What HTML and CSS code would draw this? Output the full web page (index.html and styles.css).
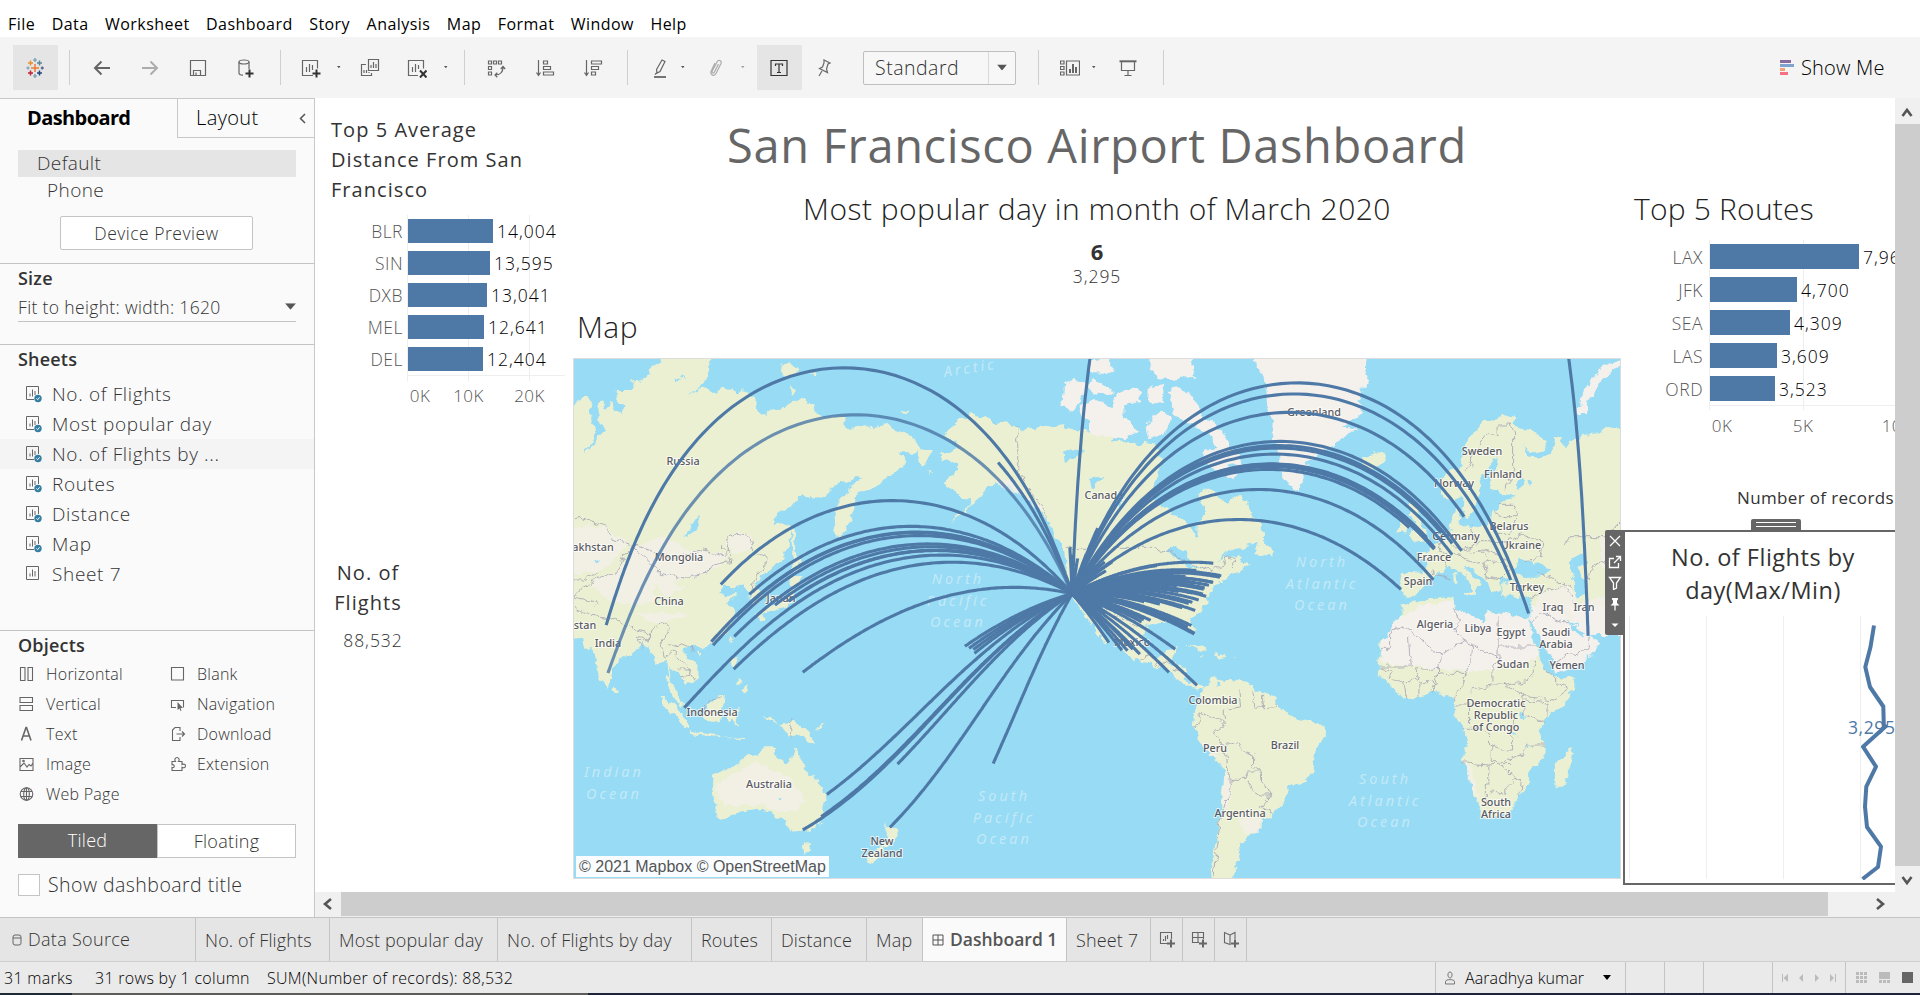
FILE: index.html
```html
<!DOCTYPE html>
<html lang="en">
<head>
<meta charset="utf-8">
<title>San Francisco Airport Dashboard</title>
<link rel="stylesheet" href="styles.css">
</head>
<body>
<svg class="defs" width="0" height="0">
  <symbol id="sheet" viewBox="0 0 18 18"><path d="M1.5 1.5h12v13h-12zM5 11.500V8.500M7.500 11.500V4.500M10 11.500V6" fill="none" stroke="#666"/></symbol>
  <symbol id="sheetok" viewBox="0 0 18 18"><path d="M9 14.500H1.500v-13h12V9M5 11.500V8.500M7.500 11.500V4.500M10 10V6" fill="none" stroke="#666"/><circle cx="13" cy="13.500" r="3.700" fill="#357fa3"/><path d="M11.400 13.500l1.200 1.200 2-2.400" fill="none" stroke="#fff"/></symbol>
  <symbol id="caret" viewBox="0 0 10 6"><path d="M0 0h10L5 6z"/></symbol>
</svg>
<div class="app">
  <nav class="menu"><span>File</span><span>Data</span><span>Worksheet</span><span>Dashboard</span><span>Story</span><span>Analysis</span><span>Map</span><span>Format</span><span>Window</span><span>Help</span></nav>

  <div class="toolbar">
    <div class="tb-on logo"><svg width="18" height="20" viewBox="0 0 18 20"><g fill="none" stroke-width="1.500"><path d="M9 6v8M5 10h8" stroke="#eb7b30"/><path d="M4.500 2.500v5M2 5h5" stroke="#e8912d"/><path d="M13.500 2.500v5M11 5h5" stroke="#5b879b"/><path d="M4.500 12.500v5M2 15h5" stroke="#c72035"/><path d="M13.500 12.500v5M11 15h5" stroke="#1f457e"/><path d="M9 0v4M7.200 2h3.600M9 16v4M7.200 18h3.600M.500 10h3M2 8.400v3.200" stroke="#7fa6b8"/><path d="M14.800 10h3M16.200 8.400v3.200" stroke="#5a6591"/></g></svg></div>
    <i class="sep s11"></i>
    <svg class="ic s22" viewBox="0 0 20 20"><path d="M18 10H3M9.500 3.500L3 10l6.500 6.500" stroke-width="2"/></svg>
    <svg class="ic s28 dim" viewBox="0 0 20 20"><path d="M2 10h15M10.500 3.500L17 10l-6.500 6.500" stroke-width="2"/></svg>
    <svg class="ic s28" viewBox="0 0 20 20"><path d="M2.500 2.500h15v15h-15zM5.500 17v-4.500h7V17M8 17v-2.500"/></svg>
    <svg class="ic s28" viewBox="0 0 20 20"><ellipse cx="8" cy="4" rx="5" ry="2"/><path d="M3 4v11c0 1.500 2 2.200 4 2.200M13 4v7"/><path d="M13.500 11.500v8M9.500 15.500h8" stroke="#333" stroke-width="2"/></svg>
    <i class="sep s24"></i>
    <svg class="ic s20" viewBox="0 0 20 20"><path d="M12 17.500H1.500v-15h15v8M5.500 14V9M8.500 14V6M11.500 12V7"/><path d="M15.500 11.500v8M11.500 15.500h8" stroke="#333" stroke-width="2"/></svg>
    <svg class="cr s15"><use href="#caret"/></svg>
    <svg class="ic s17" viewBox="0 0 20 20"><path d="M8.500 1.500h10v11h-10zM11 10V7M13.500 10V4M16 10V6M6 6.500H1.500v11h10V15M4 15v-3M6.500 15v-3M9 15v-1"/></svg>
    <svg class="ic s27" viewBox="0 0 20 20"><path d="M11 17.500H1.500v-15h15v8M5.500 14V9M8.500 14V6M11.500 11V7"/><path d="M13 12.500l6.500 7M19.500 12.500l-6.500 7" stroke="#333" stroke-width="2"/></svg>
    <svg class="cr s16"><use href="#caret"/></svg>
    <i class="sep s13"></i>
    <svg class="ic s21" viewBox="0 0 20 20"><path d="M2.500 3h3v3h-3zM7.500 3h3v3h-3zM12.500 3h3v3h-3zM2.500 8.500h3v3h-3zM2.500 14h3v3h-3zM17 9c0 5-3 8-8 8M14.800 11L17 8.500l2.200 2.500M11.300 14.800L9 17l2.300 2.200"/></svg>
    <svg class="ic s29" viewBox="0 0 20 20"><path d="M3.500 2v15M1.500 14.500l2 3 2-3M8.500 3h4v3h-4zM8.500 8.500h7v3h-7zM8.500 14h10v3h-10z"/></svg>
    <svg class="ic s28" viewBox="0 0 20 20"><path d="M3.500 2v15M1.500 14.500l2 3 2-3M8.500 3h10v3h-10zM8.500 8.500h7v3h-7zM8.500 14h4v3h-4z"/></svg>
    <i class="sep s24"></i>
    <svg class="ic s22" viewBox="0 0 20 20"><path d="M12 2l3 1.500-5 10-3 1.500-.500-3.500zM5 16.500l2-2"/><path d="M4 19h12" stroke-width="1.800"/></svg>
    <svg class="cr s11"><use href="#caret"/></svg>
    <svg class="ic s18 dim" viewBox="0 0 20 20"><path d="M12.500 6l-4 8c-1 2-3 1-2.300-.800L11 4c1.500-3 5-1.500 4 1.500l-5 10c-1.500 3-6 2-5-2L9 5"/></svg>
    <svg class="cr s14 dimf"><use href="#caret"/></svg>
    <div class="tb-on s9"><svg class="ic box" viewBox="0 0 20 20"><path d="M2 2.500h16v15H2zM6.500 8V6h7v2M10 6v8.500M8 14.500h4" stroke="#333"/></svg></div>
    <svg class="ic s12" viewBox="0 0 20 20"><path d="M10 2l6 3-2 1-1.500 5 1 3.500-8-4 3-1.500L10 5zM8 13l-3 5"/></svg>
    <div class="combo s29"><span>Standard</span><b><svg width="10" height="7" viewBox="0 0 10 6" fill="#555"><use href="#caret"/></svg></b></div>
    <i class="sep s22"></i>
    <svg class="ic s21" viewBox="0 0 20 20"><path d="M.500 3h3.500v3H.500zM.500 8.500h3.500v3H.500zM.500 14h3.500v3H.500zM6.500 3h13v14h-13z"/><path d="M10 15v-4M13 15V6M16 15v-6" stroke-width="2"/></svg>
    <svg class="cr s12"><use href="#caret"/></svg>
    <svg class="ic s19" viewBox="0 0 20 20"><path d="M3.500 4v8.500h13V4M10 12.500v5M6.500 17.500h7"/><path d="M1.500 3.300h17" stroke-width="2"/></svg>
    <i class="sep s25"></i>
    <div class="showme"><svg width="14" height="15"><path d="M0 0h11v3H0z" fill="#8a6d9e"/><path d="M0 4h14v3H0z" fill="#7fa3cf"/><path d="M0 8h5v3H0z" fill="#f2a27a"/><path d="M0 12h8v3H0z" fill="#fb6f84"/></svg><span>Show Me</span></div>
  </div>

  <div class="body">
    <aside class="panel">
      <div class="ptabs"><b>Dashboard</b><div><span>Layout</span><svg width="7" height="11"><path d="M6 1L1.500 5.500 6 10" fill="none" stroke="#555" stroke-width="1.500"/></svg></div></div>
      <div class="devices"><div class="dev on">Default</div><div class="dev sub">Phone</div><div class="preview">Device Preview</div></div>
      <section class="size"><h4>Size</h4><div class="sel"><span>Fit to height: width: 1620</span><svg width="11" height="7" viewBox="0 0 10 6" fill="#555"><use href="#caret"/></svg></div></section>
      <section class="sheets"><h4>Sheets</h4>
        <div class="sh"><svg><use href="#sheetok"/></svg><span>No. of Flights</span></div>
        <div class="sh"><svg><use href="#sheetok"/></svg><span>Most popular day</span></div>
        <div class="sh on"><svg><use href="#sheetok"/></svg><span>No. of Flights by ...</span></div>
        <div class="sh"><svg><use href="#sheetok"/></svg><span>Routes</span></div>
        <div class="sh"><svg><use href="#sheetok"/></svg><span>Distance</span></div>
        <div class="sh"><svg><use href="#sheetok"/></svg><span>Map</span></div>
        <div class="sh"><svg><use href="#sheet"/></svg><span>Sheet 7</span></div>
      </section>
      <section class="objects"><h4>Objects</h4>
        <div class="objs">
          <div><svg viewBox="0 0 16 16"><path d="M1.500 1.500h4.500v13H1.500zM9 1.500h4.500v13H9z"/></svg>Horizontal</div>
          <div><svg viewBox="0 0 16 16"><path d="M1.500 1.500h12v12.500h-12z"/></svg>Blank</div>
          <div><svg viewBox="0 0 16 16"><path d="M1 1.500h12.500v5H1zM1 9.500h12.500v5H1z"/></svg>Vertical</div>
          <div><svg viewBox="0 0 16 16"><path d="M6 11.500H1.500v-7h12v7"/><path d="M7.500 6v8l2-1.500 1 2.500 1-.500-1-2.500h2.500z" fill="#666" stroke="none"/></svg>Navigation</div>
          <div><svg viewBox="0 0 16 16"><path d="M2.500 14.500l4.500-13h.500l4.500 13M4 10h6.500" stroke-width="1.600"/></svg>Text</div>
          <div><svg viewBox="0 0 16 16"><path d="M10 5V1.500H5L2.500 4v10.500H10V11M6.500 8h8M12 5.500L14.500 8 12 10.500"/></svg>Download</div>
          <div><svg viewBox="0 0 16 16"><path d="M1 2.500h13v12H1zM1 11l4-4 3 4 2-2.500 2 1.500 2-3"/><circle cx="4.500" cy="5" r=".8"/></svg>Image</div>
          <div><svg viewBox="0 0 16 16"><path d="M2 5.500h3.500c-1.500-2 0-4 1.500-4s3 2 1.500 4h3.500v3c2-1 3.500 0 3.500 1.500s-1.500 2.300-3.500 1.300v3.200H2v-3c3 .8 3-3.500 0-2.800z"/></svg>Extension</div>
          <div><svg viewBox="0 0 16 16"><circle cx="7.500" cy="8" r="6.300"/><ellipse cx="7.500" cy="8" rx="2.800" ry="6.300"/><path d="M2 5.500h11M2 10.500h11M7.500 2v12"/></svg>Web Page</div>
        </div>
        <div class="seg"><b>Tiled</b><span>Floating</span></div>
        <div class="chk"><i></i><span>Show dashboard title</span></div>
      </section>
    </aside>

    <main class="stage">
      <div class="canvas">
        <div class="col-l">
          <h3 class="dist">Top 5 Average<br>Distance From San<br>Francisco</h3>
          <div class="chart c1">
            <svg class="grid" width="160" height="166"><path d="M.5 0v166M61.500 0v166M122.500 0v166M0 160.500h158" stroke="#eee" fill="none"/></svg>
            <div class="bar"><em>BLR</em><i style="width:85px"></i><span>14,004</span></div>
            <div class="bar"><em>SIN</em><i style="width:82px"></i><span>13,595</span></div>
            <div class="bar"><em>DXB</em><i style="width:79px"></i><span>13,041</span></div>
            <div class="bar"><em>MEL</em><i style="width:76px"></i><span>12,641</span></div>
            <div class="bar"><em>DEL</em><i style="width:75px"></i><span>12,404</span></div>
            <div class="ticks"><span>0K</span><span>10K</span><span>20K</span></div>
          </div>
          <div class="count"><h3>No. of<br>Flights</h3><p>88,532</p></div>
        </div>
        <div class="col-m">
          <h1>San Francisco Airport Dashboard</h1>
          <h2>Most popular day in month of March 2020</h2>
          <p class="six">6</p><p class="n">3,295</p>
          <h2 class="maph">Map</h2>
          <div class="map">
            <svg width="1048" height="521" viewBox="573 358 1048 521">
              <filter id="rough" x="0" y="0" width="100%" height="100%"><feTurbulence type="fractalNoise" baseFrequency=".11" numOctaves="3" seed="4"/><feDisplacementMap in="SourceGraphic" scale="9" xChannelSelector="R" yChannelSelector="G"/></filter>
              <rect x="573" y="358" width="1048" height="521" fill="#97dbf4"/>
              <g filter="url(#rough)">
              <rect x="560" y="340" width="1075" height="555" fill="#97dbf4"/>
              <g class="land" transform="translate(570 350) scale(.34439 .33333)">
                <path d="M-20 200L25 150 48 140 62 160 55 190 72 230 60 290 40 305 65 300 75 265 100 240 85 210 78 165 92 150 105 180 115 150 125 175 152 195 155 165 133 150 133 120 180 120 182 95 235 72 240 50 262 38 270 0 405 0 408 50 392 90 350 130 385 112 400 115 420 130 440 118 475 115 480 130 500 120 538 140 540 175 560 195 575 180 620 175 640 150 660 148 685 152 705 165 705 178 735 190 740 200 800 200 800 235 840 230 850 222 870 232 925 225 975 250 1000 262 1015 295 1050 300 1045 320 1030 345 1012 330 1010 300 985 310 955 310 972 335 965 350 945 370 920 390 890 405 855 425 832 430 825 470 828 490 810 520 795 545 778 567 768 545 765 500 775 470 790 440 820 410 842 385 830 382 800 400 780 398 755 420 740 440 680 438 650 450 635 470 610 490 590 512 600 530 620 515 640 525 642 550 640 580 615 630 580 665 565 675 545 690 540 710 556 740 550 755 535 765 525 750 520 720 500 700 480 712 445 710 440 730 452 742 483 732 485 738 460 755 465 770 478 815 -20 815Z"/>
                <path d="M645 535l10 5 2 60 10 40-8 20-8-10-4-60zM635 690l15-10 25 5-12 15-18 10-10-8zM640 715l10 15-5 25-20 15-30 10-40 15 10-15 45-20 20-20zM545 795l15-5 5 15-15 10zM615 40l20-5 15 15 20 5-20 20-30 5-8-20zM640 110l20 12-14 10zM695 65l22 5-8 10zM960 190l20-10 8 5-18 10zM1040 362l18 5-10 4z"/>
                <path d="M1575 250L1490 240 1440 235 1430 220 1410 235 1390 222 1350 240 1330 235 1312 245 1300 230 1270 218 1225 212 1210 200 1190 205 1165 190 1130 212 1105 235 1087 258 1115 270 1130 290 1105 306 1080 312 1085 325 1130 340 1130 365 1095 375 1090 400 1115 420 1130 445 1165 445 1160 465 1140 490 1100 515 1132 502 1155 482 1168 462 1190 445 1215 408 1230 400 1265 400 1310 435 1345 458 1370 490 1392 520 1405 560 1435 600 1440 660 1448 700 1460 745 1490 790 1575 815Z"/>
                <path class="pale" d="M1435 95l35-5 30 20-12 30-30 45-28-20zM1480 165l50-15 45 20v80l-65-15v-30l-30-10zM1505 100l20-10 50 30v15l-60-5zM1520 35l55 5v30l-45-10z"/>
                <path class="pale soft" d="M190 590L280 560 340 600 460 610 440 650 370 680 300 690 330 715 270 740 240 700 250 760 180 770 110 750 60 700 130 670zM445 580L490 540 525 560 530 600 480 610zM-20 530L100 530 170 580 100 660 -20 680zM1240 380l40 10 60 60 40 30-10 5-60-50-70-30z"/>
                <path class="water" d="M372 498l6 10-10 30-25 20-17 2 18-15zM68 630l20-5-15 15zM300 85l20 5-10 8zM325 75l10 15-12-4zM1435 305l55-12-10 25-25 10-15 8zM1510 400l25-12 8 10-22 12zM1540 385l28-10v12z"/>
                <path class="bd" d="M-20 515l50-10 50 15 20 10 30 40 55 15 70 20 40 20 35-10 60-15 45 15 30-5-10-45 30-15 30 5 20 50 35 15-5 30-30 40-5 40 M185 590l50 50 30 30 70 15 60-15 20-25 50-10 5-20-30-20 0-15 M185 590l-30 30-20 50-60 20-40 20-20 30 60 20 10 30 M-20 690l60 0 40-20M1300 228v145l45 60 45 70M1440 595h135"/>
              </g>
              <g class="land" transform="translate(1090 350) scale(.34439 .33333)">
                <path d="M-10 285L20 262 60 275 100 270 140 285 165 272 190 285 205 325 200 360 190 400 178 440 215 475 260 505 285 515 300 560 312 560 312 520 328 500 328 470 318 440 330 415 370 430 400 468 435 430 470 495 505 545 505 570 450 590 400 605 370 640 400 618 430 615 440 635 465 645 440 662 413 672 390 690 372 695 354 715 345 740 338 760 312 790 -10 800Z"/>
                <path d="M490 575l12-18 10 30 20 15-5 20-25-5-25-5zM785 320l65-15 12 20-17 20-35 15-20-10zM940 582l45-8-10-32-22-45 8-28-28-5-8 30 22 28-18 35zM895 548l28-5 4-32-22-2z"/>
                <path class="pale" d="M225 120l35-5 40 20 30 65 50 40 40 60 20 40-40 10 30 25-12 10-38-20-50-30v-40l40 0-20-40-50-30-50-20zM165 0h125l15 80-65 10-50-10zM0 30l60-5-5 45-55-5zM75 130l60-20 15 40-50 20 0 60-40-5 5-50zM170 110l45-8-5 60-40-5zM0 170l70 5 70 70-40 20-100-10zM160 220l50-40 25 20-10 50-55 15z"/>
                <path class="pale" d="M455 0L500 70 512 120 515 180 530 210 530 250 545 300 555 350 572 400 605 425 618 390 625 345 660 315 700 290 760 250 775 235 735 230 792 195 780 150 790 120 810 100 800 75 805 0Z"/>
                <path d="M1025 440L1012 400 1030 375 1075 350 1092 290 1110 245 1150 215 1190 200 1215 195 1240 205 1225 225 1275 240 1325 275 1320 300 1285 310 1255 285 1270 325 1310 330 1352 290 1350 258 1370 262 1378 300 1400 270 1430 255 1480 250 1500 230 1580 245 1580 815 1275 815 1285 770 1285 735 1240 745 1200 735 1195 700 1230 690 1190 680 1195 720 1170 735 1150 690 1120 665 1085 645 1095 665 1142 700 1125 705 1115 735 1100 690 1070 662 1050 650 1020 665 990 680 965 720 945 742 905 735 900 705 905 665 970 668 985 640 950 615 985 600 1010 575 1045 550 1050 510 1065 470 1078 500 1075 525 1100 535 1160 520 1165 490 1185 480 1190 455 1240 440 1200 430 1165 420 1160 380 1185 345 1180 320 1150 360 1130 400 1130 430 1115 480 1095 510 1080 480 1085 440 1055 455Z"/>
                <path class="pale" d="M1418 195L1422 150 1452 90 1500 45 1580 10 1580 28 1545 45 1500 75 1465 120 1440 165 1442 195Z"/>
                <path class="pale soft" d="M1300 740L1380 700 1430 760 1580 700V815H1290ZM1480 560l100-20v130l-90-10z"/>
                <path d="M895 815L915 780 965 760 1050 742 1062 790 1110 815ZM1055 675l8-15 4 40-10 8zM1080 730l35-3-5 15z"/>
                <path class="water" d="M1232 665L1245 630 1270 635 1300 640 1340 665 1300 680 1255 680ZM1395 630L1430 610 1440 640 1415 650 1435 690 1440 735 1410 740 1405 700ZM1235 400l20-15 5 20-20 15zM1270 390l15 0-5 18zM95 440l-15 30 10 10zM0 390l40-12-35 35zM235 590l45 20 20 30-15 20-30-40-30-10zM270 660l50-15-20 15z"/>
                <path class="bd" d="M65 595h110l60 12 60 35 60 20 30-10 15-35 15 5 5 30M1095 360l20-60 40-50 30 5 0-30 35 0 10 30 0 110-20 50M1110 360l-5-60M1185 460l40 0 15 50-20 40-50 0M1170 490l35 10 30 0M1085 600l50-25 60 0 60-20 60 20-10 50-40 10M1110 530l10 50-30 25-40-20M1060 610l60 30 60-10 40 30-30 30-40-10M1130 600l25 25-15 20M1140 640l10 35 35 10M1100 610l40-10 45 15 35 25M1285 740l50-20 40-10 30 40 30 60M1300 670l60 20 40 25M1375 590l20-30 100 0 45-45M1450 690l5-40 30-15 35 20M985 665l60 20M1010 580l30 40-10 35"/>
              </g>
              <g class="land" transform="translate(570 610) scale(.34439 .33333)">
                <path d="M-20 -10H475L478 20 455 70 420 100 385 112 350 110 330 115 330 130 350 150 370 170 370 200 345 225 335 215 318 190 300 180 285 175 290 215 310 240 325 290 315 290 300 260 283 230 285 200 278 150 265 155 250 165 235 125 228 110 210 105 195 112 180 125 150 150 125 170 125 200 105 233 90 215 75 170 65 110 55 115 40 110 35 90 -20 80Z"/>
                <path d="M125 225l10 3 5 20-12 3zM258 262l25 5 60 60 0 28-20-10-40-50zM345 362l80 10 15 10-90-10zM440 380l70 8-10 5zM370 120l12 8-8 12zM470 75l8 5-8 25zM470 145l12 0 0 25-14 0zM485 200l15 10-10 15zM500 235l15-10 2 20-12 8zM380 310l20-20 35-38 15 10-10 30-8 45-40-5zM455 310l10-8 35-4-20 12 10 40-15-20-10 20zM560 315l20 5 20 25 50-12 40 30 30 35-25-3-30-20-30 5-20-30-45-20zM710 355l25-8-15 12z"/>
                <path d="M412 520L415 495 470 475 510 440 545 435 560 412 600 412 595 435 630 465 642 445 652 403 665 440 682 480 735 525 745 570 735 620 715 650 700 662 665 670 635 655 615 625 595 622 575 600 550 595 500 605 480 620 435 632 425 620 425 580ZM675 700l25 0-5 25-15 3zM915 635l15 20 25 12-20 35-20 5 5-30zM912 705l5 15-25 30-20 15-15-8 20-25z"/>
                <path class="pale soft" d="M425 520L480 490 540 450 560 470 640 500 680 560 660 600 610 610 560 585 480 590 430 570ZM190 10l80 0 90 0-60 20-60 10z"/>
                <path class="water" d="M602 562l10 0 2 10-8 2z"/>
                <path class="bd" d="M10 -5l50 20 60 10 60 30 50 15 0 20-35-5M230 65l0 30-30 0 10 20M230 65l40-30 15 20-20 50 10 40M280 110l40-10 30 10 5 15M275 145l25-20 25 25 20 25 0 15-25 5M315 180l30 0 12 25M385 300l25-30 30-10M641 328v58"/>
              </g>
              <g class="land" transform="translate(1090 610) scale(.34439 .33333)">
                <path d="M-10 -10L13 13 30 60 55 100 45 100 10 50 -30 -10ZM-30 -10L13 13 55 70 82 95 91 120 135 153 182 162 203 175 241 190 256 210 279 232 304 235 325 240 329 227 308 219 287 223 274 207 277 175 253 168 232 162 241 139 247 115 220 117 211 138 182 142 167 130 154 102 159 68 161 49 182 36 220 40 237 28 262 33 280 49 289 68 301 76 304 58 292 24 312 -4V-12Z"/>
                <path d="M275 105l30 0 40 20-20 0-30-15zM360 135l20-5 20 10-28 5zM322 145h10v3h-10zM415 145h8v3h-8z"/>
                <path d="M300 330L310 290 325 240 360 205 400 210 460 215 475 240 540 262 555 300 600 325 660 335 685 355 685 375 655 420 642 500 628 512 575 530 565 575 540 600 525 625 500 628 498 655 455 680 450 700 435 705 440 740 415 770 422 780 408 840 345 840 365 700 375 640 385 560 392 480 345 430 320 390 298 350Z"/>
                <path d="M975 -30L1055 -40 1060 0 1100 10 1140 35 1160 3 1270 25 1290 80 1300 130 1320 180 1345 205 1410 205 1405 235 1370 290 1320 330 1305 370 1320 410 1320 445 1275 485 1275 525 1245 560 1215 610 1180 620 1140 628 1130 590 1110 540 1105 510 1080 450 1095 400 1090 360 1058 320 1062 270 1040 262 1010 240 960 260 915 265 870 225 838 190 838 160 845 130 840 100 880 50 905 10 900 -10Z"/>
                <path d="M1350 500L1350 460 1375 445 1398 418 1402 435 1385 500 1370 530 1352 530Z"/>
                <path class="pale" d="M905 15L960 -10 1055 -30 1060 0 1100 10 1140 35 1160 3 1270 25 1290 80 1300 150 1240 165 1120 185 1000 175 850 160 842 100 880 50ZM1270 25L1285 -10 1370 -10 1400 40 1450 75 1482 100 1430 160 1350 192 1345 150 1310 100 1285 45ZM1385 -10H1580V75H1450L1420 55Z"/>
                <path class="pale soft" d="M390 480l20 30-5 80-20 10zM430 625l70 0-5 40-45 5zM345 430l-25-40 20 10 45 60zM1085 450l25 30 20 90-20-30z"/>
                <path class="water" d="M1385 20l20 30 35 20-10 10-30-20zM1250 305l15 0 0 22-15 0zM1228 355l14 25-8-4zM1268 390l6 30-8-10zM370 215h10v12h-10z"/>
                <path class="bd" d="M845 115h25V65l40-15M910 50l110 85-10 40M925 80l5 88-90 0M1055 -5l15 40-10 20 25 40-70 40M1085 95l100 45M1185 15v130l-15 30 0 40M1110 100l-10 80-30 70-10 20M1185 108h110M840 170l40 15-5 20 30 10 30 0 20-10-10-25 40-5 30-10 0 30-30 50M910 215l10 50M955 260v-45l40 0 0 40M1000 200l50-10 50 0M1105 240l60-15 30 0 80-15 20-60M1200 220l60 40 0 50 60 30M1260 260l90 10 40-30-50-40-20-20M1265 270l65 10 0 40M1062 285l40 0 0 60M1085 355h50l25 20 0 30 50 15 20 0 0-30-10-25 15-50M1165 405v50h25l60-20 15-30 55 0M1080 458l80 7 60-5M1158 465v60h-10v50M1158 545l35 5 40-40 20-5-5 55M1190 465l50 45M300 350l20-5 0-40 60 25 10 20-30 20 10 25 25 10 35-10 20 30 25 10 0 30 20 20 0 30M390 330l0-30 50-10-5-50M470 245l10 50 60-5 5-15M500 260l5 35M390 410l10 60 10 40-10 60-20 40-10 100-10 90M410 508l40 0 10-25 30 0 5 30 30 25-5 20-25 0-20-10-15-35M520 560l-25 30 35 20M140 150l30-15 30 30M205 170l15-20 15 10M240 175l25 5"/>
                <path class="bd" d="M1280 35l30-25 60 25 20 0M1345 165l40-30 60-20 5-35M5 -5l60 5 30 30 45 20"/>
              </g>
              </g>
              <g class="oc"><text x="970" y="367" transform="rotate(-9 970 367)">Arctic</text>
                <text x="958" y="578">North</text><text x="958" y="600">Pacific</text><text x="958" y="621">Ocean</text>
                <text x="1322" y="561">North</text><text x="1322" y="583">Atlantic</text><text x="1322" y="604">Ocean</text>
                <text x="1385" y="778">South</text><text x="1385" y="800">Atlantic</text><text x="1385" y="821">Ocean</text>
                <text x="1004" y="795">South</text><text x="1004" y="817">Pacific</text><text x="1004" y="838">Ocean</text>
                <text x="614" y="771">Indian</text><text x="614" y="793">Ocean</text></g>
              <g class="ct"><text x="683" y="460">Russia</text><text x="679" y="556">Mongolia</text><text x="593" y="546">akhstan</text><text x="669" y="600">China</text><text x="781" y="597">Japan</text><text x="608" y="642">India</text><text x="585" y="624">stan</text><text x="712" y="711">Indonesia</text><text x="769" y="783">Australia</text><text x="882" y="840">New</text><text x="882" y="852">Zealand</text><text x="1104" y="494">Canada</text><text x="1314" y="411">Greenland</text><text x="1454" y="482">Norway</text><text x="1482" y="450">Sweden</text><text x="1503" y="473">Finland</text><text x="1509" y="525">Belarus</text><text x="1521" y="544">Ukraine</text><text x="1456" y="535">Germany</text><text x="1434" y="556">France</text><text x="1418" y="580">Spain</text><text x="1527" y="586">Turkey</text><text x="1553" y="606">Iraq</text><text x="1584" y="606">Iran</text><text x="1435" y="623">Algeria</text><text x="1478" y="627">Libya</text><text x="1511" y="631">Egypt</text><text x="1556" y="631">Saudi</text><text x="1556" y="643">Arabia</text><text x="1567" y="664">Yemen</text><text x="1513" y="663">Sudan</text><text x="1496" y="702">Democratic</text><text x="1496" y="714">Republic</text><text x="1496" y="726">of Congo</text><text x="1496" y="801">South</text><text x="1496" y="813">Africa</text><text x="1213" y="699">Colombia</text><text x="1215" y="747">Peru</text><text x="1285" y="744">Brazil</text><text x="1240" y="812">Argentina</text><text x="1132" y="641">Mexico</text></g>
              <g id="routes"></g>
              <rect x="573.500" y="358.500" width="1047" height="520" fill="none" stroke="#dcdcdc"/>
            </svg>
            <div class="attr">© 2021 Mapbox © OpenStreetMap</div>
          </div>
        </div>
        <div class="col-r">
          <h2>Top 5 Routes</h2>
          <div class="chart c2">
            <svg class="grid" width="190" height="170"><path d="M.5 0v170M94.500 0v170M0 165.500h190" stroke="#eee" fill="none"/></svg>
            <div class="bar"><em>LAX</em><i style="width:149px"></i><span>7,968</span></div>
            <div class="bar"><em>JFK</em><i style="width:87px"></i><span>4,700</span></div>
            <div class="bar"><em>SEA</em><i style="width:80px"></i><span>4,309</span></div>
            <div class="bar"><em>LAS</em><i style="width:67px"></i><span>3,609</span></div>
            <div class="bar"><em>ORD</em><i style="width:65px"></i><span>3,523</span></div>
            <div class="ticks"><span>0K</span><span>5K</span><span>10K</span></div>
          </div>
          <p class="rec">Number of records</p>
          <div class="zone">
            <div class="handle"><i></i><i></i></div>
            <div class="ztools">
              <svg viewBox="0 0 14 14"><path d="M2 2l10 10M12 2L2 12"/></svg>
              <svg viewBox="0 0 14 14"><path d="M6 3.500H1.500v9h9V8M6 8l6-6M8 1.500h4.500V6"/></svg>
              <svg viewBox="0 0 14 14"><path d="M1.500 1.500h11L8.500 7v5l-3 1.500V7z"/></svg>
              <svg viewBox="0 0 14 14"><path d="M4 1h6v1.500L9 3.500V6l2.500 2.500H2.500L5 6V3.500L4 2.500z" fill="#fff" stroke="none"/><path d="M7 8v5.500"/></svg>
              <svg viewBox="0 0 14 14"><path d="M3.500 5.500h7L7 9z" fill="#fff" stroke="none"/></svg>
            </div>
            <h3>No. of Flights by<br>day(Max/Min)</h3>
            <svg class="line" width="270" height="264" viewBox="1626 616 270 264"><path d="M1629.500 616v263M1706.500 616v263M1783.500 616v263M1860.500 616v263" stroke="#eee" fill="none"/><text x="1848" y="733.500">3,295</text><path d="M1874 625.500L1870.500 647 1865.300 667 1870 687 1883.300 706.500 1883.800 725 1885.500 726.500 1863 746.700 1876 766.700 1866.300 786.700 1865 806.700 1867 827 1881 846.700 1878 867 1862.500 879" fill="none" stroke="#4e79a7" stroke-width="4" stroke-linejoin="round"/></svg>
          </div>
        </div>
      </div>
      <div class="vs"><svg viewBox="0 0 24 26"><path d="M7.500 18l4.500-6 4.500 6"/></svg><i></i><svg viewBox="0 0 24 26"><path d="M7.500 11l4.500 6 4.500-6"/></svg></div>
      <div class="hs"><svg viewBox="0 0 26 24"><path d="M16 7l-6 5 6 5"/></svg><i></i><svg class="r" viewBox="0 0 26 24"><path d="M10 7l6 5-6 5"/></svg></div>
    </main>
  </div>

  <div class="tabs">
    <div class="t1"><svg width="10" height="12" viewBox="0 0 10 12"><rect x="1" y="1" width="8" height="10" rx="2" fill="none" stroke="#666"/><path d="M1 4h8" stroke="#666"/></svg><span>Data Source</span></div>
    <div class="t2">No. of Flights</div><div class="t3">Most popular day</div><div class="t4">No. of Flights by day</div><div class="t5">Routes</div><div class="t6">Distance</div><div class="t7">Map</div>
    <div class="t8"><svg width="12" height="12"><path d="M1 1h10v10H1zM6 1v10M1 6h10" fill="none" stroke="#555"/></svg><b>Dashboard 1</b></div>
    <div class="t9">Sheet 7</div>
    <div class="ta"><svg width="17" height="17"><path d="M8 12.500H1.500v-11h11V8M4.500 10V8M6.500 10V5M8.500 8V4"/><path d="M12 8.500v8M8 12.500h8" stroke-width="2"/></svg></div>
    <div class="ta"><svg width="17" height="17"><path d="M8 11.500H1.500v-10h11V8M7 1.500v10M1.500 6.500h11"/><path d="M12 8.500v8M8 12.500h8" stroke-width="2"/></svg></div>
    <div class="ta"><svg width="17" height="17"><path d="M7 4L1.500 1.500v10L7 13.500V4l5-2.500V8"/><path d="M12 8.500v8M8 12.500h8" stroke-width="2"/></svg></div>
  </div>
  <div class="status">
    <span class="m1">31 marks</span><span class="m2">31 rows by 1 column</span><span class="m3">SUM(Number of records): 88,532</span>
    <div class="user"><svg width="12" height="14"><path d="M6 1c3 0 2.500 6 0 6S3 1 6 1zM1.500 13V10.500C1.500 8 10.500 8 10.500 10.500V13z" fill="none" stroke="#777"/></svg><span>Aaradhya kumar</span><svg width="8" height="5" viewBox="0 0 10 6"><use href="#caret"/></svg></div>
    <div class="c39"></div><div class="c39"></div><div class="c69"></div>
    <div class="navs"><svg width="56" height="8" fill="#bbb"><path d="M1 0h1v8H1zM7 0v8L2.500 4zM22 0v8l-4-4zM34 0v8l4-4zM49 0v8l4-4zM54 0h1v8h-1z"/></svg></div>
    <div class="views"><svg width="58" height="13"><g fill="#bbb"><path d="M0 1h3v3H0zM4 1h3v3H4zM8 1h3v3H8zM0 5h3v3H0zM4 5h3v3H4zM8 5h3v3H8zM0 9h3v3H0zM4 9h3v3H4zM8 9h3v3H8zM23 1h11v7H23zM23 9h3v3h-3zM27 9h3v3h-3zM31 9h3v3h-3z"/></g><path d="M46 1h11v11H46z" fill="#666"/></svg></div>
  </div>
  <div class="strip"></div>
</div>
<script src="routes.js"></script>
</body>
</html>
```
FILE: routes.js
```js
// Great-circle flight paths from SFO, drawn in Web Mercator.
(function () {
  var W = 1045, R = W / (2 * Math.PI), X0 = 1427.4, Y0 = 711.7, D = Math.PI / 180;
  var home = [37.62, -122.375];
  var stops = [
    [28.57,77.1],[13.2,77.7,.82],[1.35,103.99],[22.31,113.92],[25.08,121.23],[14.51,121.02],[37.46,126.44],[40.08,116.58],
    [35.76,140.39],[35.55,139.78],[34.43,135.24],[31.14,121.8],[23.39,113.3],[13.48,144.8],[-27.38,153.12],[-33.94,151.18],
    [-37.67,144.84],[-37.01,174.79],[-17.55,-149.6],[-17.76,177.44],[21.32,-157.92],[20.9,-156.43],[19.74,-156.05],[21.98,-159.34],
    [55.62,12.65],[51.47,-0.45],[51.15,-0.18],[49.01,2.55],[48.72,2.38],[50.03,8.56],[48.35,11.79],[47.46,8.55],[52.31,4.76],[53.42,-6.27],
    [41.3,2.08],[38.77,-9.13],[41.26,28.74],[32,34.89],[25.25,55.36],[64.8,-147.9],[49.19,-123.18],[47.45,-122.3],[45.6,-122.6],
    [43.68,-79.63],[45.47,-73.74],[40.64,-73.78],[42.36,-71.01],[40.69,-74.17],[39.87,-75.24],[38.95,-77.46],[39.18,-76.67],[38.85,-77.04],
    [35.21,-80.94],[33.64,-84.43],[28.43,-81.31],[27.98,-82.53],[26.07,-80.15],[25.79,-80.29],[41.98,-87.9],[42.21,-83.35],[44.88,-93.22],
    [39.86,-104.67],[29.98,-95.34],[32.9,-97.04],[30.2,-97.67],[29.99,-90.26],[36.12,-86.68],[41.41,-81.85],[40.49,-80.23],[39.72,-86.29],
    [40,-82.89],[39.3,-94.71],[38.75,-90.37],[40.79,-111.98],[33.43,-112.01],[36.08,-115.15],[33.94,-118.41],[32.73,-117.19],[35.39,-97.6],
    [29.53,-98.47],[51.12,-114],[53.31,-113.58],[45.78,-111.15],[43.56,-116.22],[45.81,-108.54],[43.6,-110.74],[35.04,-106.61],[32.12,-110.94],
    [35.88,-78.79],[42.95,-87.9],[41.3,-95.89],[19.44,-99.07],[20.52,-103.31],[20.68,-105.25],[23.15,-109.72],[21.04,-86.87],[13.44,-89.05],
    [9.07,-79.38],[20.99,-101.48],[46.6,-120.5],[44.25,-121.15],[47.6,-117.5],[41.97,-71.5],[38.2,-85.7],[37.5,-77.3],[36.9,-76.2],
    [35.2,-89.9],[34.7,-92.2],[32.9,-80],[43.1,-77.7],[36.2,-95.9],[38.8,-104.7],[37.8,-81.1],[34.9,-82.2]
  ];
  function unit(p) {
    var a = p[0] * D, b = p[1] * D;
    return [Math.cos(a) * Math.cos(b), Math.cos(a) * Math.sin(b), Math.sin(a)];
  }
  var out = '', A = unit(home);
  stops.forEach(function (s) {
    var B = unit(s), w = Math.acos(A[0] * B[0] + A[1] * B[1] + A[2] * B[2]), n = 120, last = home[1], d = '';
    for (var i = 0; i <= n; i++) {
      var p = Math.sin((1 - i / n) * w) / Math.sin(w), q = Math.sin(i / n * w) / Math.sin(w);
      var x = p * A[0] + q * B[0], y = p * A[1] + q * B[1], z = p * A[2] + q * B[2];
      var lon = Math.atan2(y, x) / D;
      while (lon - last > 180) lon -= 360;
      while (lon - last < -180) lon += 360;
      last = lon;
      var m = Math.log(Math.tan(Math.PI / 4 + Math.asin(z) / 2));
      d += (i ? 'L' : 'M') + (X0 + lon * D * R).toFixed(1) + ' ' + (Y0 - R * m).toFixed(1);
    }
    out += '<path d="' + d + '" opacity="' + (s[2] || 1) + '"/>';
  });
  document.getElementById('routes').innerHTML = out;
})();
```
FILE: styles.css
```css
*{box-sizing:border-box}
body{margin:0;background:#fff;font-family:"Open Sans","Noto Sans",sans-serif;color:#333;font-weight:400}
h1,h2,h3,h4,p{margin:0;font-weight:400}
em,i{font-style:normal}
.defs{position:absolute}
.app{width:1920px;height:995px;display:flex;flex-direction:column;overflow:hidden;white-space:nowrap}
.menu{height:37px;flex:none;display:flex;gap:16.5px;padding:12px 0 0 8px;font-size:16px;line-height:24px;letter-spacing:.45px;color:#000}
.toolbar{height:61px;flex:none;background:#f4f4f4;display:flex;align-items:center;padding:0 35px 0 13px}
.toolbar>*{flex:none}
.tb-on{width:45px;height:45px;background:#e5e5e5;display:flex;align-items:center;justify-content:center}
.logo svg,.box{margin-right:2px}
.sep{width:1px;height:35px;background:#cfcfcf}
.ic{width:20px;height:20px;fill:none;stroke:#666;stroke-width:1.2}
.dim{opacity:.5}
.cr{width:6px;height:4px;margin:0 1px;fill:#555}
.cr use{transform:scale(.6)}
.dimf{opacity:.5}
.s9{margin-left:9px}.s11{margin-left:11px}.s12{margin-left:12px}.s13{margin-left:13px}.s14{margin-left:15px}.s15{margin-left:16px}.s16{margin-left:17px}.s17{margin-left:16px}.s18{margin-left:18px}.s19{margin-left:19px}.s20{margin-left:20px}.s21{margin-left:21px}.s22{margin-left:22px}.s24{margin-left:24px}.s25{margin-left:25px}.s27{margin-left:27px}.s28{margin-left:28px}.s29{margin-left:29px}
.combo{width:153px;height:34px;border:1px solid #bfbfbf;border-radius:2px;display:flex;background:#f7f7f7;font-size:19.5px;font-weight:300;letter-spacing:.5px;line-height:32px}
.combo span{flex:1;padding-left:11px}
.combo b{width:27px;border-left:1px solid #d9d9d9;display:flex;align-items:center;justify-content:center}
.showme{margin-left:auto!important;display:flex;align-items:center;gap:7px;font-size:20px;font-weight:300;color:#000;width:105px;letter-spacing:.2px}
.body{height:819px;flex:none;display:flex}
.panel{width:315px;flex:none;background:#fafafa;border-right:1px solid #c8c8c8;border-top:1px solid #c8c8c8;display:flex;flex-direction:column;font-weight:300}
.ptabs{height:39px;display:flex;font-size:20px;line-height:38px;color:#000}
.ptabs b{width:177px;padding-left:27px;font-weight:700;letter-spacing:-.6px}
.ptabs div{flex:1;border-left:1px solid #c8c8c8;border-bottom:1px solid #c8c8c8;padding:0 8px 0 18px;display:flex;justify-content:space-between;align-items:center;letter-spacing:.4px}
.devices{height:125px;padding:12px 18px 0;font-size:19px;letter-spacing:.4px;line-height:27px}
.dev{padding-left:19px}
.dev.on{background:#e5e5e5}
.dev.sub{padding-left:29px}
.preview{width:193px;height:34px;margin:12px 0 0 42px;border:1px solid #c4c4c4;border-radius:2px;background:#fff;text-align:center;font-size:17.5px;letter-spacing:.5px;line-height:32px}
.panel section{border-top:1px solid #c4c4c4;padding:0 18px}
h4{font-weight:600;font-size:18px;line-height:28px;letter-spacing:.2px}
.size{height:81px}
.sel{display:flex;justify-content:space-between;align-items:center;border-bottom:1px solid #c4c4c4;height:30px;font-size:17.5px;letter-spacing:.35px}
.sheets{height:286px;padding:0!important}
.sheets h4{padding:0 18px;margin-bottom:6px}
.sh{height:30px;padding-left:25px;display:flex;align-items:center;gap:9px;font-size:19px;letter-spacing:.65px}
.sh.on{background:#f4f4f4}
.sh svg{width:18px;height:18px}
.objects{height:286px}
.objs{display:grid;grid-template-columns:151px 1fr;grid-auto-rows:30px;font-size:16px;letter-spacing:.25px}
.objs div{display:flex;align-items:center;gap:10px}
.objs svg{width:18px;height:16px;margin-left:0;fill:none;stroke:#666;stroke-width:1.1}
.seg{display:flex;height:34px;margin-top:15px;font-size:18px;letter-spacing:.3px;line-height:32px;text-align:center}
.seg b{width:139px;background:#666;color:#fff;font-weight:300}
.seg span{flex:1;border:1px solid #c4c4c4;background:#fff}
.chk{display:flex;align-items:center;gap:8px;margin-top:13px;font-size:19.5px;letter-spacing:.45px}
.chk i{width:22px;height:22px;border:1px solid #c4c4c4;background:#fff}
.stage{width:1605px;display:grid;grid-template:794px 25px/1580px 25px;background:#fff}
.canvas{overflow:hidden;display:flex}
.canvas>div{flex:none}
.col-l{width:258px}
h3{font-size:20px;font-weight:500;line-height:30px;color:#333;letter-spacing:1.05px}
.dist{padding:17px 0 0 16px;height:117px}
.chart{position:relative;display:flex;flex-direction:column}
.grid{position:absolute}
.c1{height:195px;padding-top:4px;gap:8px}
.c1 .grid{left:92px;top:0}
.bar{flex:none;display:flex;align-items:center;position:relative;height:24px;font-size:17.500px;font-weight:300;letter-spacing:1px;color:#000}
.bar em{width:88px;margin-right:5px;text-align:right;color:#555;letter-spacing:.5px}
.bar i{height:100%;background:#4e79a7}
.bar span{margin-left:4px}
.ticks{flex:none;display:flex;font-size:17px;font-weight:300;letter-spacing:.4px;line-height:24px;color:#555;margin-top:5px}
.c1 .ticks span{width:61px;text-align:center}
.c1 .ticks span:first-child{margin-left:87px;width:36px}
.count{text-align:center;width:106px;margin-top:148px}
.count p{font-size:17.500px;font-weight:300;letter-spacing:1px;line-height:28px;padding:8px 0 0 10px;color:#333}
.col-m{width:1052px}
h1{font-size:47px;font-weight:500;line-height:60px;letter-spacing:.65px;color:#666;text-align:center;padding-top:17px;height:91px;margin-left:-4px}
h2{font-size:30px;font-weight:300;line-height:40px;letter-spacing:.47px;text-align:center;color:#222;margin-left:-4px}
.six{font-weight:700;font-size:22px;line-height:24px;text-align:center;margin-left:-4px;padding-top:10px}
.n{font-size:17.500px;font-weight:300;letter-spacing:1px;line-height:26px;text-align:center;margin-left:-4px;color:#333}
.maph{text-align:left;margin:18px 0 0 4px}
.map{height:521px;margin-top:11px;position:relative}
.map svg{display:block}
.land{fill:#ebf0d2}
.pale{fill:#f4f0eb}
.soft{opacity:.75}
.water{fill:#97dbf4}
.bd{fill:none;stroke:#a3a3b3;stroke-width:2.4}
#routes{fill:none;stroke:#4e79a7;stroke-width:3.1}
.oc{font:italic 14.500px "Noto Sans",sans-serif;letter-spacing:3px;fill:#c3e9f8;text-anchor:middle;dominant-baseline:central}
.ct{font:500 10.800px "Noto Sans",sans-serif;fill:#5a5a62;text-anchor:middle;dominant-baseline:central;paint-order:stroke;stroke:#fff;stroke-opacity:.7;stroke-width:2px}
.attr{position:absolute;left:3px;bottom:2px;background:rgba(255,255,255,.95);font:16px/21px "Liberation Sans",sans-serif;color:#555;padding:0 3px;height:21px}
.col-r{width:400px}
.col-r>h2{text-align:left;margin:91px 0 0 9px;letter-spacing:.2px}
.c2{height:185px;margin-top:11px;padding-top:4px;gap:8px}
.c2 .bar{height:25px}
.c2 .bar em{width:78px;margin-right:7px}
.c2 .grid{left:84px;top:0}
.c2 .ticks span{width:94px;text-align:center}
.c2 .ticks span:first-child{width:50px;margin-left:72px}
.c2 .ticks span:nth-child(2){margin-left:9px}
.rec{font-size:17px;font-weight:500;line-height:24px;margin:61px 0 0 112px;letter-spacing:.35px}
.zone{position:relative;width:280px;height:355px;margin:20px 0 0 -2px;border:2px solid #666;border-right:0;background:#fff}
.handle{position:absolute;left:126px;top:-13px;width:50px;height:12px;background:#666;border-radius:2px 2px 0 0;padding:3px 5px}
.handle i{display:block;height:1px;background:#fff;margin-bottom:3px}
.ztools{position:absolute;left:-20px;top:-2px;width:20px;height:105px;background:#666;border-radius:2px 0 0 2px;display:flex;flex-direction:column;align-items:center;justify-content:space-around}
.ztools svg{width:14px;height:14px;fill:none;stroke:#fff;stroke-width:1.3}
.zone h3{font-size:23.5px;font-weight:400;line-height:33px;text-align:center;width:276px;padding-top:9px;letter-spacing:.5px}
.zone .line{position:absolute;left:1px;top:84px}
.line text{font:17.500px "Open Sans",sans-serif;letter-spacing:.6px;fill:#4e79a7}
.vs{background:#f0f0f0;display:flex;flex-direction:column;height:794px}
.vs svg,.hs svg{fill:none;stroke:#555;stroke-width:2.6}
.vs svg{width:24px;height:26px}
.vs i{flex:1;background:#cdcdcd}
.hs{background:#f0f0f0;display:flex;height:25px;grid-column:1/3}
.hs svg{width:26px;height:24px}
.hs i{width:1487px;height:24px;background:#cdcdcd}
.hs .r{margin-left:39px}
.tabs{height:45px;flex:none;background:#e5e5e5;border-top:1px solid #c4c4c4;border-bottom:1px solid #cfcfcf;display:flex;font-size:18px;font-weight:300;letter-spacing:.15px;line-height:45px;color:#333}
.tabs div{border-right:1px solid #c4c4c4;padding-left:9px;flex:none}
.t1{width:196px;padding-left:12px!important;display:flex;align-items:center;gap:6px;letter-spacing:.3px}
.t2{width:134px}.t3{width:168px}.t4{width:194px}.t5{width:80px}.t6{width:95px}.t7{width:56px}
.t8{width:144px;background:#fafafa;display:flex;align-items:center;gap:6px}
.t8 b{font-weight:600;font-size:17.5px;letter-spacing:0;color:#555}
.t9{width:84px}
.ta{width:32px;display:flex;align-items:center;padding:0 0 0 8px!important}
.ta svg{fill:none;stroke:#666;stroke-width:1.1}
.status{height:31px;flex:none;background:#eaeaea;display:flex;align-items:center;font-size:16px;font-weight:300;letter-spacing:.3px;color:#000}
.m1{width:95px;padding-left:4px}.m2{width:172px}
.user{margin-left:auto;width:190px;display:flex;align-items:center;padding-left:8px;letter-spacing:.1px}
.user span{padding:0 17px 0 9px;width:147px}
.status div{height:31px;border-left:1px solid #c4c4c4;flex:none}
.c39{width:39px}.c69{width:69px}
.navs{width:73px;padding:12px 0 0 8px}
.views{width:75px;padding:9px 0 0 10px}
.navs svg,.views svg{display:block}
.strip{height:2px;background:linear-gradient(90deg,#1e2a36 0 72px,#5c5c5a 72px 588px,#20243a 588px)}
```
